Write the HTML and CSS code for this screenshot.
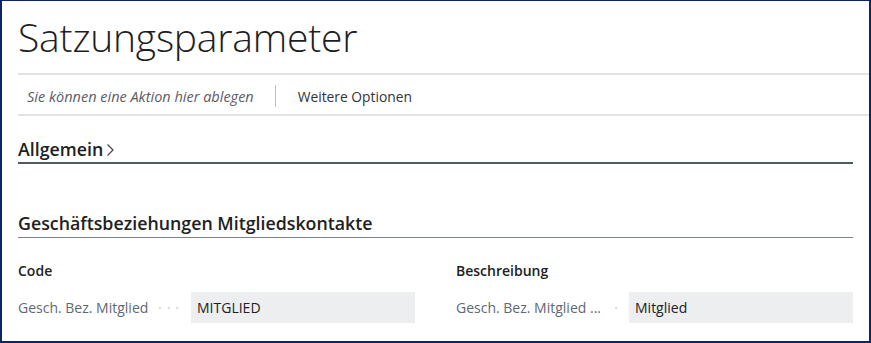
FILE: index.html
```html
<!DOCTYPE html>
<html lang="de">
<head>
<meta charset="utf-8">
<title>Satzungsparameter</title>
<link rel="stylesheet" href="styles.css">
</head>
<body>
<div class="frame">
  <h1 class="title">Satzungsparameter</h1>
  <div class="actionbar">
    <span class="drop">Sie können eine Aktion hier ablegen</span>
    <span class="sep"></span>
    <span class="more">Weitere Optionen</span>
  </div>
  <div class="content">
    <div class="section collapsed">
      <h2 class="sec-head">Allgemein<svg class="chev" width="9" height="14" viewBox="0 0 9 14"><path d="M1.5 1.5 L7 7 L1.5 12.5" fill="none" stroke="#444" stroke-width="1.2"/></svg></h2>
    </div>
    <div class="section">
      <h2 class="sec-head light">Geschäftsbeziehungen Mitgliedskontakte</h2>
      <div class="fields">
        <div class="col">
          <div class="col-head">Code</div>
          <div class="field">
            <span class="label">Gesch. Bez. Mitglied<span class="dots">···</span></span>
            <span class="value">MITGLIED</span>
          </div>
        </div>
        <div class="col">
          <div class="col-head">Beschreibung</div>
          <div class="field">
            <span class="label">Gesch. Bez. Mitglied ...<span class="dots single">·</span></span>
            <span class="value">Mitglied</span>
          </div>
        </div>
      </div>
    </div>
  </div>
</div>
</body>
</html>
```
FILE: styles.css
```css
* { box-sizing: border-box; }
html, body { margin: 0; padding: 0; background: #fff; }
body { font-family: "Open Sans", "Noto Sans", sans-serif; color: #212121; }
.frame {
  width: 871px;
  height: 343px;
  border: 2px solid #0b2463;
  border-top-width: 1px;
  overflow: hidden;
  padding-left: 16px;
}
.title {
  margin: 0;
  padding-top: 11px;
  height: 72px;
  font-weight: 300;
  font-size: 39px;
  line-height: 50px;
  color: #1e1e1e;
  letter-spacing: -0.2px;
}
.actionbar {
  border-top: 2px solid #e3e3e6;
  border-bottom: 2px solid #e3e3e6;
  height: 43px;
  display: flex;
  align-items: center;
  padding-left: 9px;
  padding-top: 3px;
}
.drop { font-style: italic; color: #5c5c66; font-size: 14.5px; }
.sep { width: 1px; height: 22px; background: #bdbdc2; margin: 0 22px 0 21px; }
.more { color: #333338; font-size: 13.8px; }
.content { padding-right: 16px; }
.sec-head {
  margin: 0;
  font-size: 17.8px;
  font-weight: 600;
  color: #212121;
  display: flex;
  align-items: center;
  line-height: 22px;
  padding-top: 22px;
  padding-bottom: 2px;
  border-bottom: 2px solid #4e5968;
}
.sec-head.light { border-bottom: 1px solid #7b828c; padding-top: 48px; padding-bottom: 3px; }
.chev { margin-left: 3px; margin-top: 2px; }
.fields {
  display: grid;
  grid-template-columns: 1fr 1fr;
  column-gap: 41px;
  padding-top: 24px;
}
.col-head { font-size: 14px; font-weight: 600; color: #212121; line-height: 18px; }
.field {
  display: flex;
  align-items: center;
  margin-top: 12px;
  height: 31px;
  font-size: 14px;
}
.label { width: 173px; color: #5f6874; white-space: nowrap; display: flex; }
.dots { color: #c6c8cc; margin-left: auto; margin-right: 7px; letter-spacing: 5px; }
.dots.single { margin-right: 6px; }
.value {
  flex: 1;
  height: 31px;
  background: #edeef0;
  padding-left: 6px;
  display: flex;
  align-items: center;
  color: #212121;
}
```
